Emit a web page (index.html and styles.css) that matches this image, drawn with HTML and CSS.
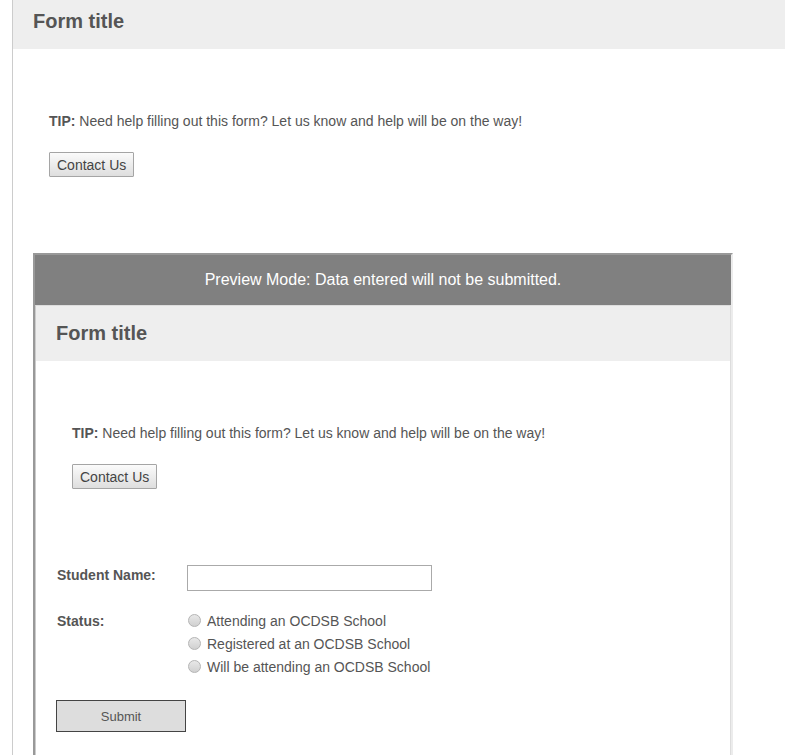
FILE: index.html
```html
<!DOCTYPE html>
<html lang="en">
<head>
  <meta charset="UTF-8">
  <title>Form title</title>
  <link rel="stylesheet" href="styles.css">
</head>
<body>
  <div class="page outer">
    <div class="form-header">
      <h1>Form title</h1>
    </div>
    <div class="form-body">
      <p class="tip"><b>TIP:</b> Need help filling out this form? Let us know and help will be on the way!</p>
      <button class="contact-btn">Contact Us</button>
    </div>

    <div class="preview">
      <div class="preview-bar">Preview Mode: Data entered will not be submitted.</div>
      <div class="page inner">
        <div class="form-header">
          <h1>Form title</h1>
        </div>
        <div class="form-body">
          <p class="tip"><b>TIP:</b> Need help filling out this form? Let us know and help will be on the way!</p>
          <button class="contact-btn">Contact Us</button>
        </div>

        <form class="fields">
          <label class="field-label" for="studentName">Student Name:</label>
          <input class="text-input" type="text" id="studentName">

          <span class="field-label status-label">Status:</span>
          <div class="radio-group">
            <label class="radio-row"><input type="radio" name="status"> Attending an OCDSB School</label>
            <label class="radio-row"><input type="radio" name="status"> Registered at an OCDSB School</label>
            <label class="radio-row"><input type="radio" name="status"> Will be attending an OCDSB School</label>
          </div>

          <button type="button" class="submit-btn">Submit</button>
        </form>
      </div>
    </div>
  </div>
</body>
</html>
```

FILE: styles.css
```css
body {
  margin: 0;
  padding: 0;
  font-family: "Liberation Sans", Arial, sans-serif;
  font-size: 14px;
  color: #555;
  background: #fff;
  overflow: hidden;
}

.page {
  border-left: 1px solid #ccc;
}

.outer {
  margin-left: 12px;
  margin-top: -7px;
}

.form-header {
  background-color: #eee;
  height: 56px;
  padding-left: 20px;
  display: flex;
  align-items: center;
}

.form-header h1 {
  margin: 0;
  font-size: 20px;
  font-weight: bold;
  color: #555;
}

.form-body {
  padding: 64px 36px 0;
}

.tip {
  margin: 0;
  line-height: 16px;
}

.contact-btn {
  display: block;
  margin-top: 23px;
  height: 25px;
  padding: 0 7px;
  font-family: inherit;
  font-size: 14px;
  color: #444;
  background: linear-gradient(to bottom, #fbfbfb, #dedede);
  border: 1px solid #a5a5a5;
  border-radius: 1px;
}

.preview {
  margin: 76px 0 0 20px;
  width: 696px;
  border-top: 2px solid #999;
  border-left: 2px solid #999;
  border-right: 2px solid #ececec;
  padding-bottom: 40px;
}

.preview-bar {
  height: 50px;
  line-height: 50px;
  background-color: #808080;
  color: #fff;
  font-size: 16px;
  text-align: center;
}

.inner {
  border-top: 1px solid #ddd;
  border-right: 1px solid #ddd;
  padding-bottom: 30px;
}

.inner .form-header {
  height: 55px;
}

.fields {
  margin: 76px 0 0 21px;
  display: grid;
  grid-template-columns: 130px auto;
  row-gap: 18px;
  align-items: start;
}

.field-label {
  font-weight: bold;
  line-height: 16px;
  padding-top: 2px;
}

.status-label {
  padding-top: 1px;
  line-height: 23px;
}

.text-input {
  margin: 0;
  padding: 0 4px;
  box-sizing: border-box;
  width: 245px;
  height: 26px;
  border: 1px solid #aaa;
  font-family: inherit;
  font-size: 14px;
}

.radio-group {
  display: flex;
  flex-direction: column;
}

.radio-row {
  display: flex;
  align-items: center;
  height: 23px;
  gap: 6px;
}

.radio-row input {
  appearance: none;
  -webkit-appearance: none;
  margin: 0 0 0 1px;
  width: 13px;
  height: 13px;
  border-radius: 50%;
  border: 1px solid #b4b4b4;
  background: linear-gradient(to bottom, #e8e8e8, #d0d0d0);
}

.submit-btn {
  grid-column: 1 / 3;
  margin: 4px 0 0 -1px;
  width: 130px;
  height: 32px;
  background-color: #ddd;
  border: 1px solid #444;
  font-family: inherit;
  font-size: 13px;
  color: #555;
}
```
